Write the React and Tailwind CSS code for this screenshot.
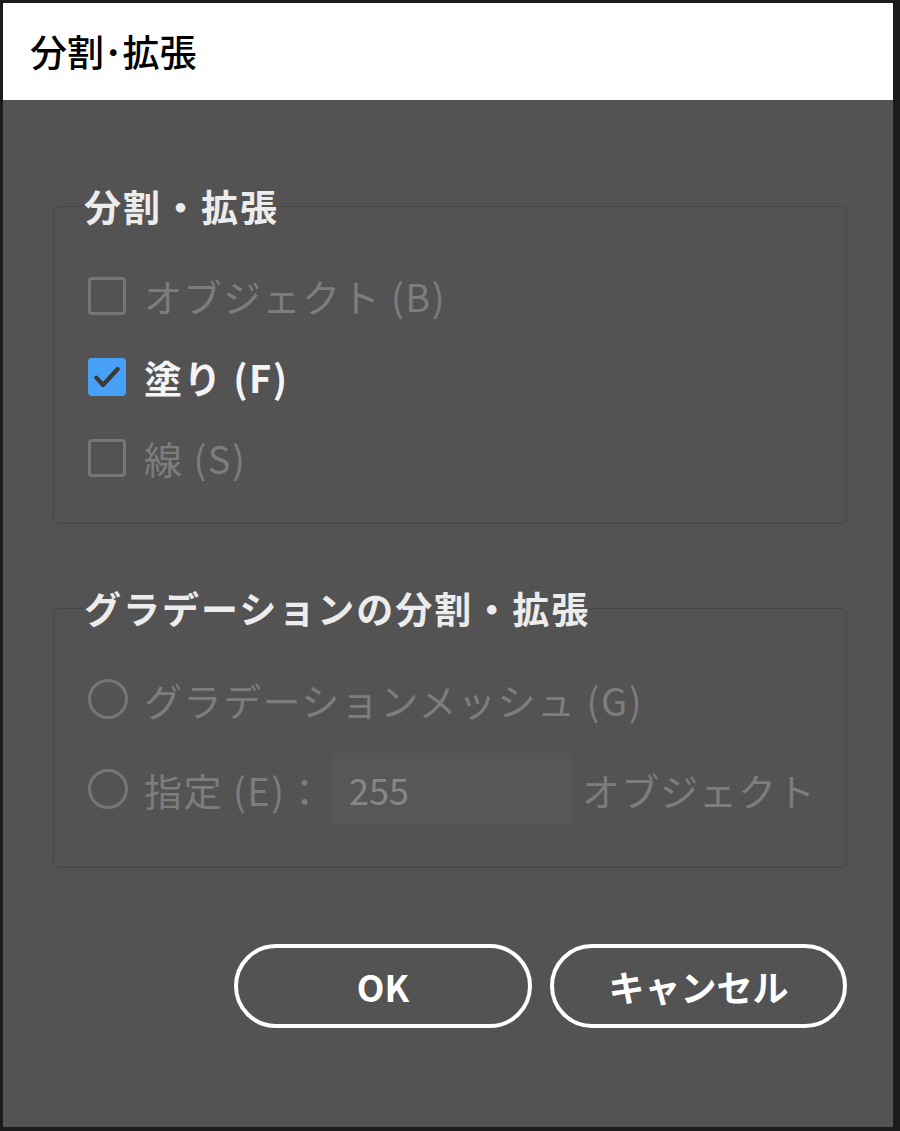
const jp = { fontFamily: '"Noto Sans CJK JP", "Noto Sans", sans-serif' };

function CheckRow({ label, checked }) {
    return (
        <div className="h-[81px] flex items-center gap-[18px] whitespace-nowrap">
            {checked ? (
                <div className="w-[38px] h-[38px] rounded-[4px] bg-[#48a1f7] flex items-center justify-center shrink-0">
                    <svg className="w-[32px] h-[32px]" viewBox="0 0 24 24" fill="none" stroke="#3b3838" strokeWidth={3.2} strokeLinecap="round" strokeLinejoin="round">
                        <path d="M4 12.5l5 5.5L20 6" />
                    </svg>
                </div>
            ) : (
                <div className="w-[38px] h-[38px] rounded-[4px] border-[3px] border-[#767676] shrink-0" />
            )}
            <span className={checked ? 'text-[38px] font-bold text-[#f4f4f4] tracking-[1.5px]' : 'text-[38px] text-[#7d7d7d] tracking-[1.5px]'}>
                {label}
            </span>
        </div>
    );
}

function Radio() {
    return <div className="w-[40px] h-[40px] rounded-full border-[3px] border-[#767676] shrink-0" />;
}

export default function App() {
    return (
        <div className="w-[900px] h-[1131px] bg-[#1c1c1c] pt-[3px] pl-[3px] pr-[7px] pb-[4px] flex flex-col" style={jp}>
            {/* Title bar */}
            <div className="h-[97px] bg-white flex items-center pl-[27px] shrink-0">
                <span className="text-[37px] font-medium text-black">分割･拡張</span>
            </div>

            {/* Body */}
            <div className="flex-1 bg-[#535353] pl-[50px] pt-[85px]">
                {/* Group 1 */}
                <fieldset className="w-[794px] border border-[#474747] rounded-[6px] pl-[34px] pr-[30px] pt-[27px] pb-[25px]">
                    <legend className="text-[37px] font-bold text-[#ececec] leading-[43px] -ml-[4px] tracking-[2px]">分割・拡張</legend>
                    <CheckRow label="オブジェクト (B)" />
                    <CheckRow label="塗り (F)" checked />
                    <CheckRow label="線 (S)" />
                </fieldset>

                {/* Group 2 */}
                <fieldset className="w-[794px] mt-[63px] border border-[#474747] rounded-[6px] pl-[34px] pr-[10px] pt-[24px] pb-[33px]">
                    <legend className="text-[37px] font-bold text-[#ececec] leading-[43px] -ml-[4px] tracking-[2px]">グラデーションの分割・拡張</legend>
                    <div className="h-[90px] flex items-center gap-[16px] whitespace-nowrap">
                        <Radio />
                        <span className="text-[38px] text-[#7d7d7d] tracking-[1.5px]">グラデーションメッシュ (G)</span>
                    </div>
                    <div className="h-[90px] flex items-center whitespace-nowrap">
                        <Radio />
                        <span className="ml-[16px] text-[38px] text-[#7d7d7d] tracking-[1.5px] shrink-0">指定 (E)：</span>
                        <div className="ml-[8px] w-[238px] h-[72px] bg-[#575757] flex items-center pl-[16px] shrink-0">
                            <span className="text-[36px] text-[#878787]">255</span>
                        </div>
                        <span className="ml-[11px] text-[38px] text-[#7d7d7d] tracking-[1px] shrink-0">オブジェクト</span>
                    </div>
                </fieldset>

                {/* Buttons */}
                <div className="w-[794px] mt-[76px] flex justify-end gap-[18px]">
                    <button className="w-[298px] h-[84px] rounded-full border-[4px] border-white text-[36px] font-bold text-white">OK</button>
                    <button className="w-[297px] h-[84px] rounded-full border-[4px] border-white text-[36px] font-bold text-white">キャンセル</button>
                </div>
            </div>
        </div>
    );
}
